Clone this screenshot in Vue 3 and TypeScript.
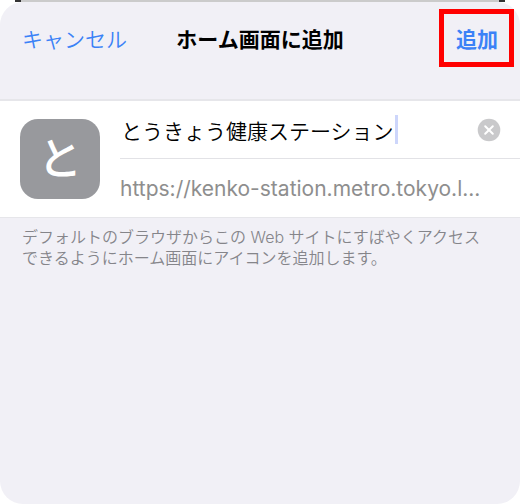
<script setup lang="ts">
import { ref } from 'vue'

const siteName = ref<string>('とうきょう健康ステーション')
const siteUrl = 'https://kenko-station.metro.tokyo.l...'

function clearName(): void {
  siteName.value = ''
}
</script>

<template>
  <div class="screen">
    <div class="backdrop" aria-hidden="true"></div>
    <main class="sheet">
      <header class="bar">
        <button type="button" class="action">キャンセル</button>
        <h1 class="title">ホーム画面に追加</h1>
        <button type="button" class="action add">追加</button>
      </header>

      <section class="card">
        <div class="icon" aria-hidden="true">と</div>
        <div class="fields">
          <div class="row name-row">
            <div class="entry">
              <input v-model="siteName" class="name" type="text" aria-label="名前" />
              <span class="caret"></span>
            </div>
            <button type="button" class="clear" aria-label="消去" @click="clearName">
              <svg viewBox="0 0 24 24" width="24" height="24">
                <circle cx="12" cy="12" r="11.3" fill="#c9c9cb" />
                <path d="M8.2 8.2l7.6 7.6M15.8 8.2l-7.6 7.6" stroke="#fff" stroke-width="2" stroke-linecap="round" />
              </svg>
            </button>
          </div>
          <div class="row url">{{ siteUrl }}</div>
        </div>
      </section>

      <p class="note">
        デフォルトのブラウザからこの Web サイトにすばやくアクセスできるようにホーム画面にアイコンを追加します。
      </p>
    </main>
  </div>
</template>

<style>
body {
  background: #fff;
}
</style>

<style scoped>
.screen {
  display: flex;
  flex-direction: column;
  min-height: 100vh;
  font-family: Inter, "Noto Sans CJK JP", sans-serif;
  font-size: 21px;
  font-weight: 350;
  color: #000;
}

.backdrop {
  height: 2px;
  margin: 0 15px;
  background: #cbcbcb;
  border: solid #333;
  border-width: 0 6px;
  box-sizing: border-box;
}

.sheet {
  flex: 1;
  background: #f1f0f6;
  border-radius: 23px;
}

.bar {
  display: grid;
  grid-template-columns: 1fr auto 1fr;
  align-items: center;
  height: 72px;
  padding: 0 22px 25px;
}

button {
  margin: 0;
  padding: 0;
  border: 0;
  background: none;
  font: inherit;
}

.action {
  justify-self: start;
  color: #3b82f7;
}

.add {
  position: relative;
  justify-self: end;
  font-weight: 600;
}

/* Highlight frame around the confirm button */
.add::after {
  content: "";
  position: absolute;
  inset: -14px -16px -14px -17px;
  border: 5px solid #f00;
}

.title {
  margin: 0;
  font-size: 21px;
  font-weight: 600;
}

.card {
  display: flex;
  align-items: center;
  gap: 20px;
  padding-left: 20px;
  background: #fff;
  border: solid #e6e6ea;
  border-width: 2px 0 1px;
}

.icon {
  display: flex;
  flex: none;
  align-items: center;
  justify-content: center;
  width: 80px;
  height: 80px;
  border-radius: 18px;
  background: #98999d;
  color: #fff;
  font-size: 44px;
  font-weight: 500;
  line-height: 80px;
}

.fields {
  flex: 1;
  min-width: 0;
}

.row {
  display: flex;
  align-items: center;
  height: 58px;
  box-sizing: border-box;
}

.name-row {
  justify-content: space-between;
  padding-right: 19px;
  border-bottom: 1px solid #e2e2e6;
}

.entry {
  display: flex;
  align-items: center;
  min-width: 0;
}

.name {
  field-sizing: content;
  min-width: 0;
  padding: 0 1px;
  border: 0;
  outline: 0;
  background: none;
  color: inherit;
  font: inherit;
}

.caret {
  width: 3px;
  height: 29px;
  background: #cdd6fb;
}

.clear,
.clear svg {
  display: block;
}

.url {
  color: #8e8e8e;
  font-weight: 400;
}

.note {
  margin: 0;
  padding: 9px 30px 9px 22px;
  color: #85858a;
  font-size: 16px;
  line-height: 21px;
}
</style>
